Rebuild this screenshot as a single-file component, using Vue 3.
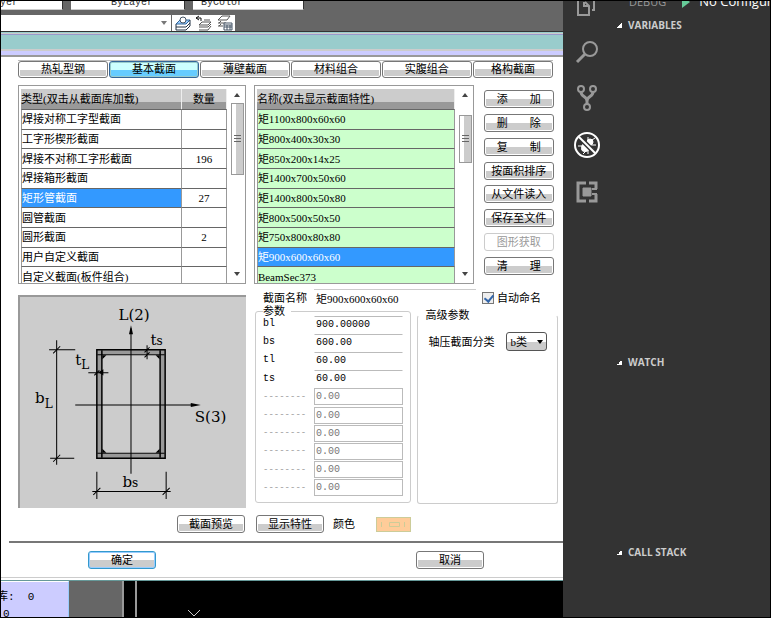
<script setup>
import { ref } from 'vue'

const tabs = ['热轧型钢', '基本截面', '薄壁截面', '材料组合', '实腹组合', '格构截面']
const activeTab = ref(1)

const types = [
  { name: '焊接对称工字型截面', count: '' },
  { name: '工字形楔形截面', count: '' },
  { name: '焊接不对称工字形截面', count: '196' },
  { name: '焊接箱形截面', count: '' },
  { name: '矩形管截面', count: '27' },
  { name: '圆管截面', count: '' },
  { name: '圆形截面', count: '2' },
  { name: '用户自定义截面', count: '' },
  { name: '自定义截面(板件组合)', count: '' }
]
const activeType = ref(4)

const sections = [
  '矩1100x800x60x60',
  '矩800x400x30x30',
  '矩850x200x14x25',
  '矩1400x700x50x60',
  '矩1400x800x50x80',
  '矩800x500x50x50',
  '矩750x800x80x80',
  '矩900x600x60x60',
  'BeamSec373'
]
const activeSection = ref(7)

const actions = [
  { text: '添　　加' },
  { text: '删　　除' },
  { text: '复　　制' },
  { text: '按面积排序' },
  { text: '从文件读入' },
  { text: '保存至文件' },
  { text: '图形获取', disabled: true },
  { text: '清　　理' }
]

const sectionName = ref('矩900x600x60x60')
const autoName = ref(true)
const params = ref([
  { label: 'bl', value: '900.00000' },
  { label: 'bs', value: '600.00' },
  { label: 'tl', value: '60.00' },
  { label: 'ts', value: '60.00' },
  ...Array.from({ length: 6 }, () => ({ label: '--------', value: '0.00', disabled: true }))
])
</script>

<template>
  <div class="screen">
    <main class="cad">
      <header class="toolbar">
        <div class="props">
          <span class="prop first">ByLayer</span>
          <span class="prop">ByLayer</span>
          <span class="prop">ByColor</span>
        </div>
        <div class="layers">
          <div class="layer-box"><i class="caret"></i></div>
          <div class="layer-icons">
            <svg width="18" height="16" viewBox="0 0 18 16">
              <path d="M2 9l4-4h10l-4 4z" fill="#9cf" stroke="#369" />
              <path d="M2 12h10l4-4M2 15h10l4-4M2 9v6M16 5v6" fill="none" stroke="#234" />
              <circle cx="9" cy="5" r="3" fill="#fff" stroke="#456" />
            </svg>
            <svg width="18" height="16" viewBox="0 0 18 16">
              <path d="M1 3h5v3M4 1L1 3l3 2" fill="none" stroke="#111" />
              <path d="M4 10l3-3h9l-3 3zM4 12h9l3-3M4 15h9l3-4M9 5h6" fill="none" stroke="#555" />
            </svg>
            <svg width="18" height="16" viewBox="0 0 18 16">
              <path d="M2 5l4-4h8l-3 4zM2 8h8M2 11h5M3 8l2-2M3 11l2-2" fill="none" stroke="#555" />
              <path d="M8 8h8v7H8zM8 10h8M11 10v5M14 10v5M8 12h8" fill="#fff" stroke="#456" />
            </svg>
          </div>
        </div>
      </header>

      <section class="dialog">
        <div class="titlebar"></div>
        <div class="body">
          <nav class="tabs">
            <button v-for="(t, i) in tabs" :key="t" type="button" :class="{ on: i === activeTab }" @click="activeTab = i">{{ t }}</button>
          </nav>

          <div class="lists">
            <div class="list">
              <div class="viewport">
                <table>
                  <thead>
                    <tr><th>类型(双击从截面库加载)</th><th class="count">数量</th></tr>
                  </thead>
                  <tbody>
                    <tr v-for="(t, i) in types" :key="t.name" :class="{ on: i === activeType }" @click="activeType = i">
                      <td>{{ t.name }}</td><td class="count">{{ t.count }}</td>
                    </tr>
                  </tbody>
                </table>
              </div>
              <div class="scroll types"><i class="up"></i><i class="thumb"></i><i class="down"></i></div>
            </div>

            <div class="list green">
              <div class="viewport">
                <table>
                  <thead>
                    <tr><th>名称(双击显示截面特性)</th></tr>
                  </thead>
                  <tbody>
                    <tr v-for="(s, i) in sections" :key="s" :class="{ on: i === activeSection }" @click="activeSection = i">
                      <td>{{ s }}</td>
                    </tr>
                  </tbody>
                </table>
              </div>
              <div class="scroll names"><i class="up"></i><i class="thumb"></i><i class="down"></i></div>
            </div>

            <div class="actions">
              <button v-for="a in actions" :key="a.text" type="button" class="btn" :disabled="a.disabled">{{ a.text }}</button>
            </div>
          </div>

          <div class="details">
            <figure class="diagram">
              <svg viewBox="20 297 225 210">
                <rect x="96" y="349" width="69" height="109" fill="#999" />
                <rect x="101" y="354" width="59" height="99" fill="#ccc" />
                <g fill="none" stroke="#000">
                  <rect x="96.500" y="349.500" width="68" height="108" stroke-width="1.500" />
                  <path d="M101.500 350v107M159.500 350v107" stroke-width="1.500" />
                  <path d="M97 354.500h67M97 452.500h67" />
                  <path d="M130.500 328v145M75 404.500h120M56.500 340v124M92 490.500h78" />
                  <path d="M49 349.500h26M50 457.500h24M96.500 471v27M165.500 471v27" />
                  <path d="M53 353l7-7M53 461l7-7M93 494l7-7M162 494l7-7" />
                  <path d="M88 372.500h20M94 375l5-5M146.500 345v14M144 352l5-5M144 357l5-5" />
                </g>
                <path d="M130.500 325l2 9h-4zM200 404.500l-10-2v4zM102 355h4l-4 4zM159 355h-4l4 4zM102 452h4l-4-4zM159 452h-4l4-4zM98 372l5-3v6z" />
                <text x="118" y="320">L(2)</text>
                <text x="194" y="421">S(3)</text>
                <text x="150" y="345">t<tspan class="sub">s</tspan></text>
                <text x="75" y="365">t<tspan class="sub" dy="4">L</tspan></text>
                <text x="35" y="403">b<tspan class="sub" dy="4">L</tspan></text>
                <text x="122" y="486">b<tspan class="sub">s</tspan></text>
              </svg>
            </figure>

            <div class="form">
              <div class="name-row">
                <label for="section-name">截面名称</label>
                <input id="section-name" v-model="sectionName" type="text" />
                <label class="auto"><input v-model="autoName" type="checkbox" />自动命名</label>
              </div>
              <div class="groups">
                <fieldset class="params">
                  <legend>参数</legend>
                  <div class="rows">
                    <div v-for="(p, i) in params" :key="i" class="row" :class="{ off: p.disabled }">
                      <label :for="'param-' + i">{{ p.label }}</label>
                      <input :id="'param-' + i" v-model="p.value" type="text" :disabled="p.disabled" />
                    </div>
                  </div>
                </fieldset>
                <fieldset class="advanced">
                  <legend>高级参数</legend>
                  <div class="axis">
                    <label for="axis-class">轴压截面分类</label>
                    <span class="pick">
                      <select id="axis-class"><option>b类</option></select>
                      <i class="caret"></i>
                    </span>
                  </div>
                </fieldset>
              </div>
            </div>
          </div>

          <div class="preview">
            <button type="button" class="btn">截面预览</button>
            <button type="button" class="btn">显示特性</button>
            <label for="colour">颜色</label>
            <button id="colour" type="button" class="swatch">
              <svg width="33" height="13" viewBox="0 0 33 13" fill="none" stroke="#cc9">
                <path d="M4.500 4v5M27.500 4v5M12.500 4.500h10v4h-10z" />
              </svg>
            </button>
          </div>
        </div>
        <footer class="foot">
          <button type="button" class="btn ok">确定</button>
          <button type="button" class="btn cancel">取消</button>
        </footer>
        <div class="edge"></div>
      </section>

      <div class="status">
        <div class="store"><span>库: &nbsp;0</span><span class="second">0</span></div>
        <div class="grip"></div>
        <div class="canvas">
          <svg width="14" height="7" viewBox="0 0 14 7"><path d="M1 0l6 6 6-6" fill="none" stroke="#ccc" /></svg>
        </div>
      </div>
    </main>

    <aside class="editor">
      <nav class="activity">
        <a href="#" class="files" aria-label="Files">
          <svg width="24" height="16" viewBox="0 0 24 16" fill="none" stroke="#999" stroke-width="2">
            <path d="M3 0v14h11V5l-4-4M9 1v4h5" /><path d="M17 9h2V0" />
          </svg>
        </a>
        <a href="#" aria-label="Search">
          <svg width="26" height="26" viewBox="0 0 26 26" fill="none" stroke="#999">
            <circle cx="16" cy="11" r="7" stroke-width="2" /><path d="M11 16l-8 8" stroke-width="3" />
          </svg>
        </a>
        <a href="#" aria-label="Source control">
          <svg width="26" height="28" viewBox="0 0 26 28" fill="none" stroke="#999">
            <path d="M7 8c0 5 6 4 6 9M19 8c0 5-6 4-6 9v4" stroke-width="3" />
            <g stroke-width="2" fill="#333"><circle cx="7" cy="5" r="3" /><circle cx="19" cy="5" r="3" /><circle cx="13" cy="23" r="3" /></g>
          </svg>
        </a>
        <a href="#" aria-label="Debug">
          <svg width="28" height="28" viewBox="0 0 28 28" fill="none" stroke="#fff">
            <ellipse cx="13" cy="16" rx="4" ry="5" fill="#fff" transform="rotate(45 13 16)" />
            <circle cx="17" cy="11" r="3" fill="#fff" />
            <path d="M11 12L8 9M10 15H5M15 19v4M13 20l-3 3M17 17l4 1M17 14h6M19 9l3-2M15 9V6" stroke-width="1" />
            <path d="M6 6l16 16" stroke="#333" stroke-width="5" />
            <path d="M6 6l16 16" stroke-width="2" />
            <circle cx="14" cy="14" r="12" stroke-width="2" />
          </svg>
        </a>
        <a href="#" aria-label="Extensions">
          <svg width="24" height="24" viewBox="0 0 24 24" fill="none" stroke="#999">
            <path d="M11 3H3v18h8M14 3h7v6M14 21h7v-7" stroke-width="3" />
            <path d="M17 9h5M17 14h5" stroke-width="2" />
            <path d="M8 8h8v8H8z" fill="#999" />
          </svg>
        </a>
      </nav>
      <div class="debug">
        <div class="debug-bar">
          <span>DEBUG</span>
          <svg width="8" height="9" viewBox="0 0 8 9"><path d="M0 -5l8 6-8 6z" fill="#6c9" /></svg>
          <span class="config">No Configurations</span>
        </div>
        <section class="pane variables"><h2><i></i>VARIABLES</h2></section>
        <section class="pane watch"><h2><i></i>WATCH</h2></section>
        <section class="pane"><h2><i></i>CALL STACK</h2></section>
      </div>
    </aside>
  </div>
</template>

<style>
body { margin: 0; background: #000; }
</style>

<style scoped>
* { box-sizing: border-box; }
.screen {
  display: grid;
  grid-template-columns: minmax(0, 562fr) minmax(0, 207fr);
  min-height: 100vh;
  border: 1px solid #000;
  background: #000;
  color: #000;
  font: 11px/14px "Liberation Serif", "Noto Sans CJK SC", serif;
}
button, input, select { font: inherit; color: inherit; margin: 0; }
.cad { display: flex; flex-direction: column; min-width: 0; }

.toolbar { background: #666; height: 30px; }
.props { display: flex; gap: 8px; height: 9px; }
.prop {
  flex: 0 0 114px;
  height: 9px;
  overflow: hidden;
  background: #fff;
  border-right: 1px solid #333;
  border-bottom: 1px solid #ccc;
  color: #333;
  font: 10px/4px "Liberation Mono", monospace;
  text-indent: 40px;
}
.prop.first { flex-basis: 62px; text-indent: -25px; }
.prop:last-child { flex-basis: 111px; text-indent: 8px; }
.layers { display: flex; height: 16px; margin-top: 5px; }
.layer-box { display: flex; align-items: center; justify-content: flex-end; width: 171px; padding-right: 4px; background: #fff; border-right: 1px solid #666; }
.layer-icons { display: flex; justify-content: space-around; width: 63px; background: #fff; }
.caret { border: 3px solid transparent; border-top: 4px solid #777; border-bottom: 0; }

.dialog { background: #fff; }
.titlebar {
  height: 26px;
  border-top: 1px solid #333;
  border-bottom: 2px solid #999;
  background: linear-gradient(#9cc 1px, #ccc 1px 2px, #99c 2px 3px, #9cc 3px 17px, #ccc 17px 19px, #ccf 19px);
}
.body { padding: 3px 5px 8px 17px; }
.tabs { display: flex; gap: 1px; margin-right: 5px; border-top: 1px solid #bbb; }
.tabs button, .btn {
  border: 1px solid #777;
  border-radius: 3px;
  background: linear-gradient(#fff 50%, #ccc 50%);
  box-shadow: inset 0 0 0 1px #fff;
  padding: 0;
  text-align: center;
  white-space: nowrap;
}
.tabs button { flex: 9 1 0; height: 17px; line-height: 15px; }
.tabs button:last-child { flex-grow: 8; }
.tabs button.on { border-color: #369; background: linear-gradient(#cff 50%, #6cf 50%); box-shadow: inset 0 0 0 1px #9cc; }
.btn { height: 18px; line-height: 16px; }
.btn:disabled { border-color: #ccc; background: #fff; color: #999; }

.lists {
  display: grid;
  grid-template-columns: 227fr 219fr 71fr;
  grid-template-rows: 199px;
  column-gap: 8px;
  margin: 7px 5px 0 0;
}
.list { display: flex; gap: 4px; min-width: 0; min-height: 0; padding: 3px 1px 0 2px; border: 1px solid #999; }
.viewport { flex: 1; min-width: 0; overflow: hidden; }
table { width: 100%; height: 197px; border-collapse: separate; border-spacing: 0; table-layout: fixed; }
th, td { padding: 0; text-align: left; font-weight: 400; line-height: 14px; white-space: nowrap; overflow: hidden; }
th { height: 20px; background: linear-gradient(#ccc 65%, #999 65%); border-right: 1px solid #eee; }
td { border-top: 1px solid #666; border-right: 1px solid #999; border-left: 1px solid #999; }
.count { width: 45px; text-align: center; border-left: 0; }
.green td { background: #cfc; }
.on td:first-child { background: #39f; color: #fff; }
.scroll { display: flex; flex-direction: column; align-items: center; width: 13px; padding: 4px 0 7px; }
.up { border: 3px solid transparent; border-bottom: 4px solid #444; border-top: 0; }
.down { border: 3px solid transparent; border-top: 4px solid #444; border-bottom: 0; margin-top: auto; }
.thumb {
  width: 13px;
  height: 72px;
  margin-top: 6px;
  border: 1px solid #999;
  background:
    repeating-linear-gradient(#666 0 1px, transparent 1px 3px) center / 7px 8px no-repeat,
    linear-gradient(90deg, #fff 40%, #ccc 40%);
}
.names .thumb { height: 48px; margin-top: 18px; }
.actions { display: flex; flex-direction: column; justify-content: space-between; padding: 5px 0 9px; margin-left: 2px; margin-right: -1px; }

.details { display: grid; grid-template-columns: 228fr 304fr; column-gap: 8px; padding-top: 5px; }
.diagram { margin: 6px 0 0; height: 213px; border: 2px solid #999; border-width: 2px 0 0 2px; background: #ccc; }
.diagram svg { display: block; width: 100%; height: 100%; }
.diagram text { font: 15px "DejaVu Serif", serif; }
.diagram .sub { font-size: 12px; }
.form { display: flex; flex-direction: column; min-width: 0; }
.name-row { display: flex; align-items: center; height: 17px; padding-left: 9px; white-space: nowrap; }
.name-row > label:first-child { width: 51px; }
.name-row > input { flex: 0 1 162px; min-width: 0; height: 17px; padding: 0 2px; border: 0; border-top: 1px solid #ccc; background: none; }
.auto { display: flex; align-items: center; gap: 3px; margin-left: 6px; }
.auto input { appearance: none; position: relative; width: 12px; height: 12px; border: 1px solid #777; background: #eee; }
.auto input:checked::after { content: ""; position: absolute; left: 3px; top: 0; width: 4px; height: 7px; border: solid #36a; border-width: 0 2px 2px 0; transform: rotate(40deg); }
.groups { display: grid; grid-template-columns: minmax(0, 157fr) minmax(0, 141fr); column-gap: 6px; padding-left: 1px; }
fieldset { min-width: 0; margin: 0; padding: 0; border: 1px solid #ccc; border-radius: 3px; }
legend { margin-left: 7px; padding: 0 6px 0 0; line-height: 8px; }
.params { margin-top: 1px; height: 196px; }
.rows { display: grid; grid-template-columns: minmax(0, 1fr); grid-auto-rows: 1fr; height: 182px; padding: 0 7px; }
.row { display: flex; align-items: center; font: 10px/14px "Liberation Mono", monospace; }
.row label { flex: 0 0 51px; }
.row input { flex: 1; width: 0; min-width: 0; height: 17px; padding: 0 1px; border: 1px solid transparent; border-top-color: #bbb; background: #fff; }
.row.off label { color: #999; font-size: 9px; }
.row.off input { border-color: #bbb; color: #777; }
.advanced { height: 193px; margin-top: 5px; border-top-color: transparent; }
.axis { display: flex; align-items: center; gap: 12px; padding: 13px 0 0 10px; white-space: nowrap; }
.pick { position: relative; flex: 0 0 41px; }
.pick select { appearance: none; display: block; width: 100%; height: 19px; padding: 0 3px; border: 1px solid #555; border-radius: 3px; background: linear-gradient(#fff 50%, #ccc 50%); }
.pick .caret { position: absolute; right: 4px; top: 8px; border-top-color: #000; pointer-events: none; }

.preview { display: flex; align-items: center; padding: 7px 0 0 159px; }
.preview .btn { width: 68px; margin-right: 11px; }
.preview .btn + .btn { margin-right: 9px; }
.swatch { width: 35px; height: 15px; margin-left: 21px; padding: 0; border: 1px solid #cc9; background: #fc9; }
.swatch svg { display: block; }
.foot { display: flex; justify-content: space-between; margin-left: 8px; padding: 8px 79px 8px 79px; border-top: 2px solid #777; }
.foot .btn { width: 68px; }
.ok { border-color: #39c; box-shadow: inset 0 0 0 1px #9cf; }
.edge { height: 4px; border-top: 1px solid #ccc; border-bottom: 1px solid #699; }

.status { display: flex; flex: 1; min-height: 36px; }
.store { display: flex; flex-direction: column; flex: 0 0 68px; height: 36px; overflow: hidden; padding-top: 8px; background: #ccf; border-top: 1px solid #fff; border-right: 1px solid #9cf; text-indent: -4px; font: 11px/14px "Liberation Mono", "Noto Sans CJK SC", monospace; }
.second { padding-left: 6px; margin-top: 3px; }
.grip { flex: 0 0 55px; background: #666; border-right: 2px solid #999; }
.canvas { flex: 1; display: flex; align-items: flex-end; margin-left: 11px; padding-left: 50px; border-left: 2px solid #999; }

.editor { display: flex; min-width: 0; overflow: hidden; background: #333; color: #ccc; font-family: "Open Sans", "Noto Sans", sans-serif; }
.activity { display: flex; flex-direction: column; flex: 0 0 47px; }
.activity a { display: flex; align-items: center; justify-content: center; height: 47px; }
.activity .files { height: 26px; align-items: flex-start; }
.debug { display: flex; flex-direction: column; flex: 1; min-width: 0; }
.debug-bar { display: flex; align-items: flex-start; height: 15px; overflow: hidden; padding-left: 19px; font-size: 11px; line-height: 1px; color: #999; white-space: nowrap; }
.debug-bar svg { margin: 0 9px 0 16px; flex: none; }
.debug-bar span:first-child { width: 38px; font-size: 11px; }
.config { color: #fff; font-size: 13px; }
.pane { flex: 1 1 66px; }
.pane.variables { flex: 0 0 337px; }
.pane.watch { flex: 0 0 190px; }
.pane h2 { display: flex; align-items: center; gap: 6px; margin: 0; padding: 2px 0 0 7px; font-size: 10px; line-height: 14px; font-weight: 700; }
.pane i { border: solid transparent; border-width: 5px 0 0 5px; background: linear-gradient(135deg, transparent 50%, #fff 50%) border-box; }
</style>
